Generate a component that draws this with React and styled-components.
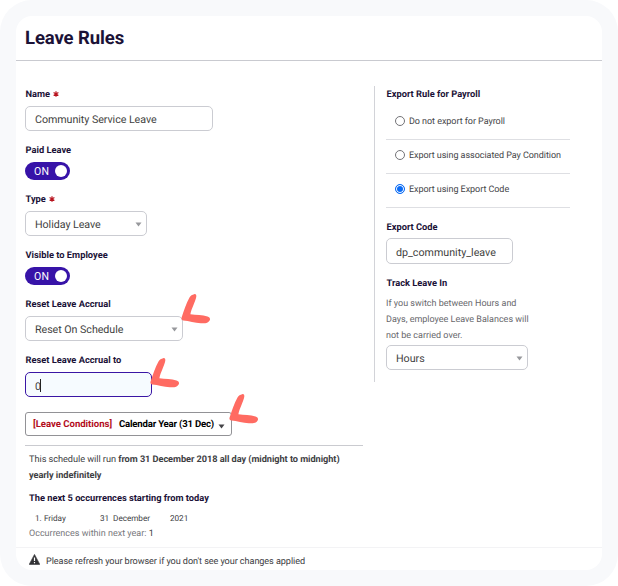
import React, { useState } from 'react'
import styled, { createGlobalStyle } from 'styled-components'

const GlobalStyle = createGlobalStyle`
    * {
        box-sizing: border-box;
    }
    body {
        margin: 0;
        background: #ffffff;
        font-family: Roboto, "Liberation Sans", sans-serif;
        text-rendering: geometricPrecision;
    }
`
const Frame = styled.div`
    width: 618px;
    height: 586px;
    padding: 16px;
    border-radius: 32px;
    background: #f8f9fb;
`
const Card = styled.main`
    display: flex;
    flex-direction: column;
    width: 586px;
    height: 554px;
    border-radius: 16px;
    background: #ffffff;
    overflow: hidden;
`
const Header = styled.header`
    height: 45px;
    padding-left: 9px;
    border-bottom: 1px solid #c9cad0;
`
const Title = styled.h1`
    margin: 0;
    font-size: 18.5px;
    line-height: 44px;
    font-weight: 700;
    letter-spacing: -0.1px;
    color: #1b1237;
`
const Content = styled.div`
    display: flex;
    height: 486px;
    padding: 25px 9px 0;
`
const LeftColumn = styled.section`
    width: 349px;
`
const RightColumn = styled.section`
    width: 196px;
    height: 296px;
    padding-left: 11px;
    border-left: 1px solid #d2d3d8;
`
const Field = styled.div`
    margin-bottom: 11px;
`
const Label = styled.div`
    height: 16px;
    margin-bottom: ${(props) => props.$gap ?? 4}px;
    padding: 1px 0 0 0.5px;
    font-size: 9.3px;
    line-height: 16px;
    font-weight: 700;
    white-space: nowrap;
    color: #1b1237;
`
const RequiredMark = styled.svg`
    width: 6px;
    height: 6px;
    margin-left: 1px;
    vertical-align: 0;
`
const Control = styled.div`
    position: relative;
    display: flex;
    align-items: center;
    justify-content: space-between;
    width: ${(props) => props.$width}px;
    height: ${(props) => props.$height || 25}px;
    padding: 2px 4px 0 9px;
    border: 1px solid ${(props) => (props.$focused ? '#3a16a5' : '#cbccd2')};
    border-radius: 5px;
    background: ${(props) => (props.$focused ? '#f6fbff' : '#ffffff')};
    font-size: 10.7px;
    letter-spacing: ${(props) => props.$spacing ?? -0.05}px;
    white-space: nowrap;
    color: #3f3f41;
`
const Caret = styled.span`
    display: inline-block;
    width: 1px;
    height: 13px;
    margin-left: -1px;
    background: #222222;
    vertical-align: -2px;
`
const ArrowIcon = styled.svg`
    flex-shrink: 0;
    width: 7px;
    height: 5px;
    fill: ${(props) => props.$color || '#97989c'};
`
const Switch = styled.button`
    display: flex;
    align-items: center;
    justify-content: space-between;
    width: 45px;
    height: 18px;
    padding: 0 3px 0 9px;
    border: 0;
    border-radius: 9px;
    background: #3713a8;
    font-family: inherit;
    font-size: 10.5px;
    letter-spacing: 0.2px;
    color: #ffffff;
`
const Knob = styled.span`
    width: 12px;
    height: 12px;
    border-radius: 50%;
    background: #ffffff;
`
const ScheduleButton = styled.div`
    position: relative;
    display: flex;
    align-items: center;
    width: 207px;
    height: 24px;
    margin-top: 15px;
    padding: 0 6px 0 7px;
    border: 1px solid #929296;
    border-radius: 3px;
    font-size: 9.6px;
    font-weight: 700;
    white-space: nowrap;
    color: #000000;

    ${ArrowIcon} {
        margin-top: 4px;
    }
`
const ConditionTag = styled.span`
    flex: 0 0 86px;
    letter-spacing: -0.03px;
    color: #b30d1c;
`
const ScheduleName = styled.span`
    flex: 0 0 99px;
    letter-spacing: -0.2px;
`
const Schedule = styled.div`
    width: 338px;
    margin-top: 9px;
    padding: 6px 4px 0;
    border-top: 1px solid #cacbd0;
    color: #404043;
`
const Summary = styled.p`
    margin: 0;
    font-size: 9.2px;
    line-height: 16px;
    letter-spacing: -0.05px;
    white-space: nowrap;
`
const OccurrencesTitle = styled.h2`
    margin: 7px 0 4px;
    font-size: 9.3px;
    line-height: 16px;
    font-weight: 700;
    letter-spacing: -0.02px;
    color: #1b1237;
`
const Occurrence = styled.div`
    display: grid;
    grid-template-columns: 9px 56px 70px auto;
    padding-left: 6px;
    font-size: 8.2px;
    line-height: 16px;
    letter-spacing: -0.05px;
`
const OccurrenceCount = styled.div`
    margin-top: -1px;
    font-size: 9px;
    line-height: 16px;
    color: #77777b;
`
const Count = styled.span`
    color: #404043;
`
const RadioRow = styled.label`
    display: flex;
    align-items: flex-start;
    width: 184px;
    height: 34px;
    padding: 8px 0 0 9px;
    border-bottom: 1px solid #dedfe3;
    font-size: 9px;
    line-height: 16px;
    letter-spacing: -0.05px;
    white-space: nowrap;
    color: #454548;
`
const RadioDot = styled.span`
    width: 10px;
    height: 10px;
    margin: 2px 4px 0 0;
    border: 1px solid ${(props) => (props.$checked ? '#0b6cf5' : '#737377')};
    border-radius: 50%;
    background: ${(props) => (props.$checked ? '#0b6cf5' : '#ffffff')};
    box-shadow: inset 0 0 0 1px #ffffff;
`
const ExportFields = styled.div`
    padding-top: 11px;
`
const Hint = styled.p`
    width: 150px;
    margin: 0 0 1px;
    padding-top: 1px;
    font-size: 9px;
    line-height: 16px;
    white-space: nowrap;
    color: #68686c;
`
const Footer = styled.footer`
    display: flex;
    align-items: center;
    height: 23px;
    padding: 5px 0 0 13px;
    border-top: 1px solid #f3f3f5;
    font-size: 9.1px;
    letter-spacing: -0.07px;
    white-space: nowrap;
    color: #404043;
`
const WarningIcon = styled.svg`
    width: 11px;
    height: 11px;
    margin: -5px 6px 0 0;
`
const PointerSvg = styled.svg`
    position: absolute;
    top: ${(props) => props.$top}px;
    left: ${(props) => props.$left}px;
    width: 30px;
    height: 30px;
    fill: #ff6b62;
`

// ------------------------------------------------------------------

const Required = () => (
    <RequiredMark viewBox="0 0 6 6" stroke="#b8141f" strokeWidth="1.2">
        <path d="M3 .2v5.6M.6 1.6l4.8 2.8M.6 4.4l4.8-2.8" />
    </RequiredMark>
)

const DownArrow = ({ color }) => (
    <ArrowIcon $color={color} viewBox="0 0 7 5">
        <path d="M.5.5h6L3.5 4.5z" />
    </ArrowIcon>
)

const Pointer = ({ top, left }) => (
    <PointerSvg $top={top} $left={left} viewBox="0 0 30 30">
        <path d="M13.2.2C14.7-.2 15.5.9 15.3 2.5C14.9 6.5 10.2 15 9.4 20.3C15 21.2 21.5 20.6 26.5 22.6C28.7 23.3 29.6 24.7 28.6 26.6C27.2 29.5 23.3 29.6 19.8 29.2C13.9 28.8 8 27 2.3 26.5C.7 26.2.1 25 .6 23.5C3 16.8 5 9.3 8.5 3.5C9.6 1.7 11.2.5 13.2.2Z" />
    </PointerSvg>
)

const Toggle = () => {
    const [on, setOn] = useState(true)
    return (
        <Switch onClick={() => setOn(!on)}>
            {on ? 'ON' : 'OFF'}
            <Knob />
        </Switch>
    )
}

const exportRules = [
    'Do not export for Payroll',
    'Export using associated Pay Condition',
    'Export using Export Code',
]

function App() {
    const [exportRule, setExportRule] = useState('Export using Export Code')

    return (
        <Frame>
            <GlobalStyle />
            <Card>
                <Header>
                    <Title>Leave Rules</Title>
                </Header>
                <Content>
                    <LeftColumn>
                        <Field>
                            <Label>Name <Required /></Label>
                            <Control $width={188}>Community Service Leave</Control>
                        </Field>
                        <Field>
                            <Label>Paid Leave</Label>
                            <Toggle />
                        </Field>
                        <Field>
                            <Label>Type <Required /></Label>
                            <Control $width={122}>Holiday Leave<DownArrow /></Control>
                        </Field>
                        <Field>
                            <Label>Visible to Employee</Label>
                            <Toggle />
                        </Field>
                        <Field>
                            <Label>Reset Leave Accrual</Label>
                            <Control $width={158}>
                                Reset On Schedule<DownArrow />
                                <Pointer top={-23} left={155} />
                            </Control>
                        </Field>
                        <Field>
                            <Label>Reset Leave Accrual to</Label>
                            <Control $width={127} $focused>
                                <span>0<Caret /></span>
                                <Pointer top={-15} left={124} />
                            </Control>
                        </Field>
                        <ScheduleButton>
                            <ConditionTag>[Leave Conditions]</ConditionTag>
                            <ScheduleName>Calendar Year (31 Dec)</ScheduleName>
                            <DownArrow color="#444448" />
                            <Pointer top={-19} left={203} />
                        </ScheduleButton>
                        <Schedule>
                            <Summary>
                                This schedule will run <b>from 31 December 2018 all day (midnight to midnight)<br />
                                yearly indefinitely</b>
                            </Summary>
                            <OccurrencesTitle>The next 5 occurrences starting from today</OccurrencesTitle>
                            <Occurrence>
                                <span>1.</span>
                                <span>Friday</span>
                                <span>31&nbsp; December</span>
                                <span>2021</span>
                            </Occurrence>
                            <OccurrenceCount>Occurrences within next year: <Count>1</Count></OccurrenceCount>
                        </Schedule>
                    </LeftColumn>
                    <RightColumn>
                        <Label>Export Rule for Payroll</Label>
                        {exportRules.map((rule) => (
                            <RadioRow key={rule} onClick={() => setExportRule(rule)}>
                                <RadioDot $checked={rule === exportRule} />
                                {rule}
                            </RadioRow>
                        ))}
                        <ExportFields>
                            <Field>
                                <Label $gap={3}>Export Code</Label>
                                <Control $width={127} $height={26} $spacing={0}>dp_community_leave</Control>
                            </Field>
                            <Label>Track Leave In</Label>
                            <Hint>
                                If you switch between Hours and<br />
                                Days, employee Leave Balances will<br />
                                not be carried over.
                            </Hint>
                            <Control $width={142} $spacing={0}>Hours<DownArrow /></Control>
                        </ExportFields>
                    </RightColumn>
                </Content>
                <Footer>
                    <WarningIcon viewBox="0 0 11 11">
                        <path d="M5.5.4 10.8 10.4H.2Z" fill="#333336" stroke="#333336" strokeWidth=".6" strokeLinejoin="round" />
                        <path d="M5.5 3.6v3.5M5.5 8v1.3" stroke="#ffffff" strokeWidth="1.2" />
                    </WarningIcon>
                    Please refresh your browser if you don't see your changes applied
                </Footer>
            </Card>
        </Frame>
    )
}

export default App
